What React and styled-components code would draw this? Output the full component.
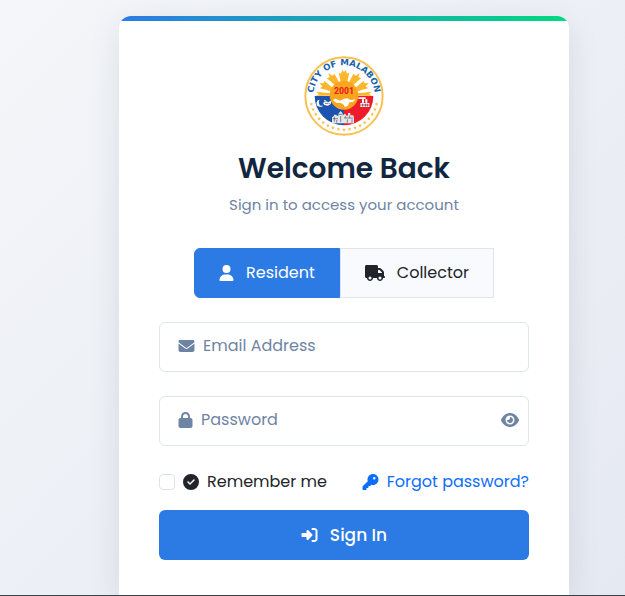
import React, { useState } from 'react'
import styled, { createGlobalStyle } from 'styled-components'
import {
  FaUser,
  FaTruck,
  FaEnvelope,
  FaLock,
  FaEye,
  FaEyeSlash,
  FaCircleCheck,
  FaKey,
  FaRightToBracket
} from 'react-icons/fa6'

const GlobalStyle = createGlobalStyle`
  *, *::before, *::after {
    box-sizing: border-box;
  }
  body {
    margin: 0;
    color: #212529;
    font-family: Poppins, Inter, sans-serif;
    font-size: 16px;
    line-height: 24px;
  }
  button, input {
    font: inherit;
  }
`

const Page = styled.div`
  display: flex;
  justify-content: center;
  min-height: 100vh;
  padding: 16px 0 0 63px;
  border-bottom: 1px solid #3b444d;
  background: linear-gradient(135deg, #f4f6f9 0%, #e5e9f2 100%);
`

const Card = styled.main`
  width: 100%;
  max-width: 450px;
  overflow: hidden;
  border-radius: 12px 12px 0 0;
  background: #fff;
  box-shadow: 0 8px 32px rgba(18, 38, 63, 0.1);

  &::before {
    content: '';
    display: block;
    height: 5px;
    background: linear-gradient(90deg, #2c7be5, #00d97e);
  }
`

const CardBody = styled.div`
  padding: 35px 40px;
`

const Header = styled.header`
  display: flex;
  flex-direction: column;
  align-items: center;
  margin-bottom: 31px;
  text-align: center;
`

const Seal = styled.svg`
  width: 80px;
  height: 80px;
`

const Title = styled.h1`
  margin: 16px 0 7px;
  color: #12263f;
  font-size: 28px;
  font-weight: 600;
  line-height: 34px;
`

const Subtitle = styled.p`
  margin: 0;
  color: #6e84a3;
  font-size: 15px;
`

const Icon = styled.span`
  display: flex;
  flex: none;
  width: ${props => props.$width || 17}px;

  svg {
    width: 100%;
    height: 16px;
  }
`

const Tabs = styled.div`
  display: flex;
  justify-content: center;
  margin-bottom: 24px;
`

const Tab = styled.button`
  display: flex;
  align-items: center;
  gap: 12px;
  height: 50px;
  padding: 0 24px;
  border: 1px solid ${props => (props.$active ? '#2c7be5' : '#e0e4ec')};
  border-radius: ${props => (props.$active ? '6px 0 0 6px' : '0')};
  background: ${props => (props.$active ? '#2c7be5' : '#f9fafd')};
  color: ${props => (props.$active ? '#fff' : '#212529')};
  cursor: pointer;
`

const Field = styled.div`
  display: flex;
  align-items: center;
  gap: 8px;
  height: 50px;
  margin-bottom: 24px;
  padding: 0 9px 2px 18px;
  border: 1px solid #e0e4ec;
  border-radius: 6px;
  color: #6e84a3;

  &:focus-within {
    border-color: #2c7be5;
  }
`

const Input = styled.input`
  flex: 1;
  min-width: 0;
  padding: 0;
  border: 0;
  outline: 0;
  background: transparent;
  color: #12263f;

  &::placeholder {
    color: #6e84a3;
    opacity: 1;
  }
`

const IconButton = styled.button`
  display: flex;
  padding: 0;
  border: 0;
  background: none;
  color: #6e84a3;
  font-size: 18px;
  cursor: pointer;
`

const Options = styled.div`
  display: flex;
  align-items: center;
  justify-content: space-between;
  margin-bottom: 16px;
`

const Remember = styled.label`
  display: flex;
  align-items: center;
  gap: 8px;
`

const Checkbox = styled.input`
  appearance: none;
  width: 16px;
  height: 16px;
  margin: 0;
  border: 1px solid #dee2e6;
  border-radius: 4px;
  background: #fff;

  &:checked {
    border-color: #2c7be5;
    background: #2c7be5;
  }
`

const ForgotLink = styled.a`
  display: flex;
  align-items: center;
  gap: 8px;
  color: #0d6efd;
  text-decoration: none;
`

const SubmitButton = styled.button`
  display: flex;
  align-items: center;
  justify-content: center;
  gap: 12px;
  width: 100%;
  height: 50px;
  border: 0;
  border-radius: 6px;
  background: #2c7be5;
  color: #fff;
  font-size: 17px;
  font-weight: 500;
  cursor: pointer;
`

const starAngles = Array.from({ length: 17 }, (_, i) => 14 + i * 9.5)

const starPoints = (cx, cy, r) =>
  Array.from({ length: 10 }, (_, i) => {
    const a = (i * Math.PI) / 5 - Math.PI / 2
    const d = i % 2 ? r * 0.45 : r
    return `${cx + d * Math.cos(a)},${cy + d * Math.sin(a)}`
  }).join(' ')

const CitySeal = () => (
  <Seal viewBox="0 0 240 240" role="img" aria-label="City of Malabon seal">
    <defs>
      <path id="seal-arc" d="M 37 160 A 92 92 0 1 1 203 160" />
      <clipPath id="seal-field">
        <circle cx="120" cy="120" r="88" />
      </clipPath>
    </defs>
    <circle cx="120" cy="120" r="116" fill="#fff" stroke="#fbc14f" strokeWidth="6" />
    <g clipPath="url(#seal-field)">
      <path d="M30 120h90v90H30z" fill="#1b53ae" />
      <path d="M120 120h90v90h-90z" fill="#ee1c2b" />
      {/* sun rays */}
      <g fill="#fbb62c">
        <path d="M110 78 104 50 111 53 115 42 120 48 125 42 129 53 136 50 130 78z" />
        <path d="M93 88 68 66 77 64 73 52 85 59 92 54 106 80z" />
        <path d="M147 88 172 66 163 64 167 52 155 59 148 54 134 80z" />
        <path d="M80 106 48 97 55 91 46 82 58 82 61 75 86 95z" />
        <path d="M160 106 192 97 185 91 194 82 182 82 179 75 154 95z" />
        <path d="M78 119H36l9-5-9-7 42 5zM162 119h42l-9-5 9-7-42 5z" />
      </g>
    </g>
    <circle cx="120" cy="118" r="43" fill="#f9a51e" />
    <text
      x="120"
      y="115"
      fill="#e5231f"
      fontFamily="Roboto, sans-serif"
      fontSize="26"
      fontWeight="800"
      textAnchor="middle"
    >
      2001
    </text>
    <path
      d="M86 132 95 128 108 134 118 129 129 127 140 132 155 130 147 138 136 139 132 149 123 153 117 144 107 140 98 141z"
      fill="#fff"
    />
    {/* moon and fish */}
    <g fill="#fff">
      <path d="M47 131c-10 0-13 15-4 20 5 3 12 1 15-2-7 1-12-2-13-7-1-4 0-8 2-11z" />
      <path d="M57 141 65 136 73 138 82 134 80 144 72 149 61 147z" />
      <path d="M60 131 67 134 62 137z" />
    </g>
    <g stroke="#263f65" strokeWidth="2" fill="none">
      <path d="M63 142h9M46 147l7 1M73 141l4 2" />
    </g>
    {/* factory */}
    <g fill="#fff">
      <path d="M163 124h22v5h-22zM174 130h6v10h-6zM184 130h6v10h-6zM169 141h27v12h-27z" />
    </g>
    <path d="M176 143v9M184 143v9M190 143v9M169 147h27" stroke="#6d2027" strokeWidth="2" />
    {/* city hall */}
    <path
      d="M84 184 90 179V176H98V179H103L104 172 110 165 116 172V178L123 173 128 179H132V171H139V178H147L150 183V202H84z"
      fill="#e3e5e7"
    />
    <path
      d="M86 188h16M120 186h28M91 182v15M98 192v8M105 175h9M110 180v18M124 180v6M130 190v10M137 178v8M144 190v10"
      stroke="#53585e"
      strokeWidth="2"
      fill="none"
    />
    <g fill="#fbbf4b">
      {starAngles.map(angle => {
        const a = (angle * Math.PI) / 180
        return (
          <polygon
            key={angle}
            points={starPoints(120 + 101 * Math.cos(a), 120 + 101 * Math.sin(a), 6)}
          />
        )
      })}
    </g>
    <text
      fill="#1b62ae"
      fontFamily="DejaVu Sans, sans-serif"
      fontSize="26"
      fontWeight="700"
      textAnchor="middle"
    >
      <textPath href="#seal-arc" startOffset="50%">
        CITY OF MALABON
      </textPath>
    </text>
  </Seal>
)

const App = () => {
  const [role, setRole] = useState('resident')
  const [showPassword, setShowPassword] = useState(false)

  return (
    <>
      <GlobalStyle />
      <Page>
        <Card>
          <CardBody>
            <Header>
              <CitySeal />
              <Title>Welcome Back</Title>
              <Subtitle>Sign in to access your account</Subtitle>
            </Header>
            <form onSubmit={e => e.preventDefault()}>
              <Tabs>
                <Tab
                  type="button"
                  $active={role === 'resident'}
                  aria-pressed={role === 'resident'}
                  onClick={() => setRole('resident')}
                >
                  <Icon $width={15}>
                    <FaUser />
                  </Icon>
                  Resident
                </Tab>
                <Tab
                  type="button"
                  $active={role === 'collector'}
                  aria-pressed={role === 'collector'}
                  onClick={() => setRole('collector')}
                >
                  <Icon $width={20}>
                    <FaTruck />
                  </Icon>
                  Collector
                </Tab>
              </Tabs>
              <Field>
                <label htmlFor="email" aria-label="Email Address">
                  <Icon>
                    <FaEnvelope />
                  </Icon>
                </label>
                <Input id="email" type="email" placeholder="Email Address" />
              </Field>
              <Field>
                <label htmlFor="password" aria-label="Password">
                  <Icon $width={15}>
                    <FaLock />
                  </Icon>
                </label>
                <Input
                  id="password"
                  type={showPassword ? 'text' : 'password'}
                  placeholder="Password"
                />
                <IconButton
                  type="button"
                  aria-label="Show password"
                  onClick={() => setShowPassword(!showPassword)}
                >
                  {showPassword ? <FaEyeSlash /> : <FaEye />}
                </IconButton>
              </Field>
              <Options>
                <Remember>
                  <Checkbox type="checkbox" />
                  <Icon $width={16}>
                    <FaCircleCheck />
                  </Icon>
                  Remember me
                </Remember>
                <ForgotLink href="#forgot">
                  <Icon>
                    <FaKey />
                  </Icon>
                  Forgot password?
                </ForgotLink>
              </Options>
              <SubmitButton type="submit">
                <Icon>
                  <FaRightToBracket />
                </Icon>
                Sign In
              </SubmitButton>
            </form>
          </CardBody>
        </Card>
      </Page>
    </>
  )
}

export default App
